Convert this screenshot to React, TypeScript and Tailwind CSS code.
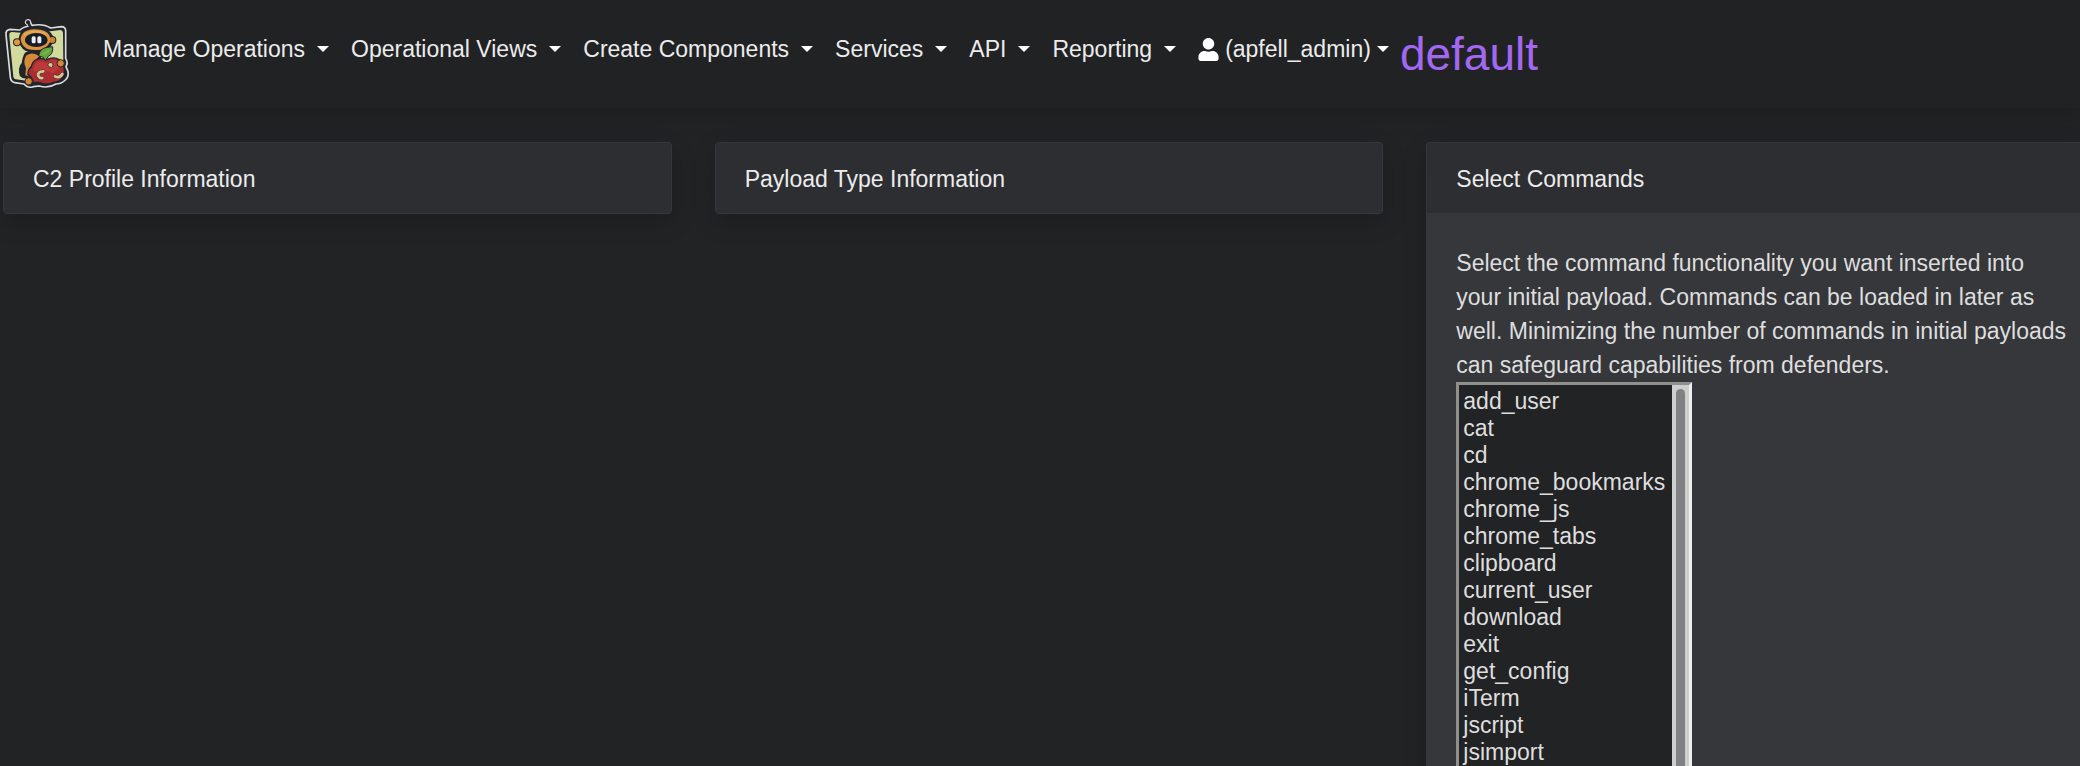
import type { ReactNode } from "react";
import { FaUser } from "react-icons/fa";

const menus = [
  "Manage Operations",
  "Operational Views",
  "Create Components",
  "Services",
  "API",
  "Reporting",
];

const commands = [
  "add_user", "cat", "cd", "chrome_bookmarks", "chrome_js", "chrome_tabs",
  "clipboard", "current_user", "download", "exit", "get_config", "iTerm",
  "jscript", "jsimport", "jsimport_call", "list_apps", "list_users", "ls",
  "persist_emond", "prompt", "pwd", "rm",
];

function Caret() {
  return (
    <svg viewBox="0 0 12 6" className="h-[6px] w-3 fill-white" aria-hidden="true">
      <path d="M0 0h12L6 6z" />
    </svg>
  );
}

function Logo() {
  return (
    <svg viewBox="12 24 198 216" className="h-[72px] w-[66px] shrink-0" role="img" aria-label="Apfell">
      <path
        d="M30 58 60 60Q70 50 88 48L82 43A7 7 0 1 1 91 36L96 46Q130 40 152 54L184 50Q196 50 197 62L197 145Q205 158 198 170L204 184Q207 200 196 210Q184 222 168 222Q144 236 118 228L100 230Q84 236 72 222L44 218Q32 214 31 202L18 74Q16 60 30 58Z"
        fill="#20252c" stroke="#dcdce0" strokeWidth="5" strokeLinejoin="round"
      />
      <path d="M36 66 62 68 150 64 181 60Q188 60 189 68L190 160 80 212 47 208Q41 207 40 200L28 78Q27 66 36 66Z" fill="#d3da9e" />
      <path d="M84 38 92 56" stroke="#20252c" strokeWidth="6" />
      <circle cx="84" cy="37" r="6" fill="#20252c" />
      <path d="M56 88Q58 54 100 52Q150 51 160 82Q162 116 122 126Q96 128 76 122Q58 112 56 88Z" fill="#20252c" />
      <circle cx="51" cy="97" r="12" fill="#20252c" />
      <circle cx="51" cy="97" r="9" fill="#e0953c" />
      <circle cx="157" cy="90" r="12" fill="#20252c" />
      <circle cx="157" cy="90" r="9" fill="#d3802f" />
      <path d="M62 88Q64 60 102 58Q146 58 151 84Q153 108 122 119Q100 122 82 117Q64 108 62 88Z" fill="#dc9440" />
      <path d="M72 76Q84 65 106 65Q128 65 138 74" fill="none" stroke="#e6ab58" strokeWidth="5" />
      <ellipse cx="109" cy="90" rx="34" ry="21" fill="#171d27" />
      <rect x="95" y="79" width="12" height="21" rx="5" fill="#ededf3" />
      <rect x="112" y="79" width="12" height="21" rx="5" fill="#ededf3" />
      <path d="M75 128Q98 113 128 130L120 150 92 174 94 208 66 204 64 170Q66 140 75 128Z" fill="#20252c" />
      <path d="M78 137Q98 123 118 139L100 155 88 176 90 200 76 196 78 174Q68 156 78 137Z" fill="#d48a3a" />
      <path d="M64 160Q52 176 60 199L70 205 70 165Z" fill="#20252c" />
      <path d="M107 150Q123 142 140 149Q160 138 180 150Q198 170 192 196Q184 216 162 217Q138 228 116 217L101 218Q96 202 84 194Q84 174 94 172Q96 156 107 150Z" fill="#a92d31" stroke="#20252c" strokeWidth="4" />
      <path d="M109 158Q124 150 139 160Q151 149 170 152L180 172 160 190 130 180 102 186Q101 166 109 158Z" fill="#bb393a" />
      <path d="M143 162Q149 154 158 159Q162 170 154 173Q143 172 143 162Z" fill="#d0cb95" stroke="#5d2a2c" strokeWidth="3" />
      <path d="M130 184Q112 184 115 198Q119 206 127 204" fill="none" stroke="#5d2a2c" strokeWidth="11" strokeLinecap="round" />
      <path d="M130 184Q112 184 115 198Q119 206 127 204" fill="none" stroke="#d0cb95" strokeWidth="8" strokeLinecap="round" />
      <path d="M165 199Q179 206 187 192" fill="none" stroke="#5d2a2c" strokeWidth="11" strokeLinecap="round" />
      <path d="M165 199Q179 206 187 192" fill="none" stroke="#d0cb95" strokeWidth="8" strokeLinecap="round" />
      <path d="M116 138Q119 114 142 112L158 110Q160 132 145 139L136 152 130 142Z" fill="#67a53e" stroke="#20252c" strokeWidth="3" />
      <path d="M128 134 148 120" stroke="#82bb50" strokeWidth="4" />
      <circle cx="86" cy="214" r="11" fill="#d48734" stroke="#20252c" strokeWidth="3" />
      <circle cx="182" cy="160" r="11" fill="#d48734" stroke="#20252c" strokeWidth="3" />
    </svg>
  );
}

function Card({ title, children }: { title: string; children?: ReactNode }) {
  return (
    <section className="rounded-[4px] border border-[#36373c] bg-[#36373b] shadow-[0_8px_24px_rgba(0,0,0,0.18)]">
      <h2 className={`rounded-t-[3px] bg-[#2d2e31] px-[29px] pt-[19px] pb-[17px] leading-[34px] text-[#ececec] ${children ? "border-b border-[#32383c]" : ""}`}>
        {title}
      </h2>
      {children}
    </section>
  );
}

export default function App() {
  return (
    <div className="h-screen overflow-hidden bg-[#222325] font-['Liberation_Sans',Arial,sans-serif] text-[23px] text-[#dedede]">
      <nav className="flex h-[108px] items-start bg-[#212224] pt-[18px] pl-1 text-[#ececec] shadow-[0_4px_24px_rgba(0,0,0,0.2)]">
        <Logo />
        <div className="ml-[22px] flex items-start">
          {menus.map((m) => (
            <button key={m} type="button" className="flex items-center gap-3 px-[11px] leading-[62px] whitespace-nowrap">
              {m}
              <Caret />
            </button>
          ))}
          <button type="button" className="flex items-center gap-[6px] px-[11px] leading-[62px] whitespace-nowrap">
            <FaUser className="h-[23px] w-[21px] text-white" />
            (apfell_admin)
            <Caret />
          </button>
          <a href="#default" className="text-[46px] leading-[72px] text-[#a368f2]">default</a>
        </div>
      </nav>
      <main className="mt-[34px] -mr-[15px] ml-[3px] grid grid-cols-3 items-start gap-[43px]">
        <Card title="C2 Profile Information" />
        <Card title="Payload Type Information" />
        <Card title="Select Commands">
          <div className="pt-8 pr-6 pb-8 pl-[29px]">
            <label htmlFor="commands" className="block leading-[34px]">
              Select the command functionality you want inserted into your initial payload. Commands can be
              loaded in later as well. Minimizing the number of commands in initial payloads can safeguard
              capabilities from defenders.
            </label>
            <div className="flex w-[236px] border-[3px] border-t-[#8f8f8c] border-r-[#efefef] border-b-[#efefef] border-l-[#8f8f8c] bg-[#222325]">
              <select
                id="commands"
                multiple
                size={20}
                className="min-w-0 flex-1 bg-[#222325] pt-[3px] text-[#dedede] outline-none"
              >
                {commands.map((c) => (
                  <option key={c} className="h-[27px] min-h-0 px-1 py-0 leading-[27px]">{c}</option>
                ))}
              </select>
              <div className="w-[17px] bg-[#cfcfcf] p-1" aria-hidden="true">
                <div className="h-9/10 w-[9px] rounded-full bg-[#808182]" />
              </div>
            </div>
          </div>
        </Card>
      </main>
    </div>
  );
}
